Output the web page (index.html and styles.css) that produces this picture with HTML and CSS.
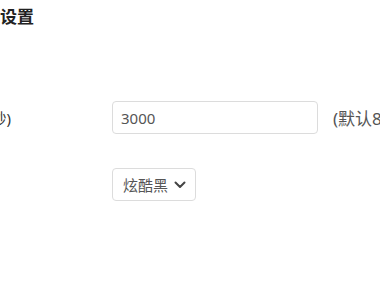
FILE: index.html
```html
<!DOCTYPE html>
<html lang="zh">
<head>
<meta charset="utf-8">
<link rel="stylesheet" href="styles.css">
</head>
<body>
<div class="panel">
  <h2 class="title">高级设置</h2>
  <div class="row row-first">
    <div class="label">刷新间隔(毫秒)</div>
    <input class="input" type="text" value="3000">
    <span class="hint">(默认8000)</span>
  </div>
  <div class="row">
    <div class="label">主题</div>
    <div class="select">
      <span>炫酷黑</span>
      <svg class="chev" width="12" height="8" viewBox="0 0 12 8"><polyline points="1.5,1.5 6,6 10.5,1.5" fill="none" stroke="#444" stroke-width="2" stroke-linecap="round" stroke-linejoin="round"/></svg>
    </div>
  </div>
</div>
</body>
</html>
```
FILE: styles.css
```css
html, body { margin: 0; padding: 0; background: #fff; overflow: hidden; }
body { font-family: "Noto Sans", "Noto Sans CJK SC", sans-serif; color: #333; }
.panel { margin-left: -92px; padding-top: 4px; width: 700px; }
.title { margin: 0; padding-left: 58px; font-size: 17px; font-weight: bold; line-height: 26px; color: #222; }
.row { display: flex; align-items: center; height: 33px; margin-top: 34px; }
.row-first { margin-top: 71px; }
.label { width: 204px; flex: none; box-sizing: border-box; padding-left: 4px; font-size: 15px; color: #333; white-space: nowrap; }
.input { box-sizing: border-box; width: 206px; height: 33px; border: 1px solid #dcdcdc; border-radius: 4px; padding: 0 8px; font-family: "Noto Sans", "Noto Sans CJK SC", sans-serif; font-size: 15px; color: #555; outline: none; }
.hint { margin-left: 15px; font-size: 17px; color: #555; white-space: nowrap; }
.select { box-sizing: border-box; height: 33px; display: flex; align-items: center; gap: 6px; padding: 0 9px 0 10px; border: 1px solid #dcdcdc; border-radius: 4px; font-size: 15px; color: #555; }
.chev { display: block; }
```
